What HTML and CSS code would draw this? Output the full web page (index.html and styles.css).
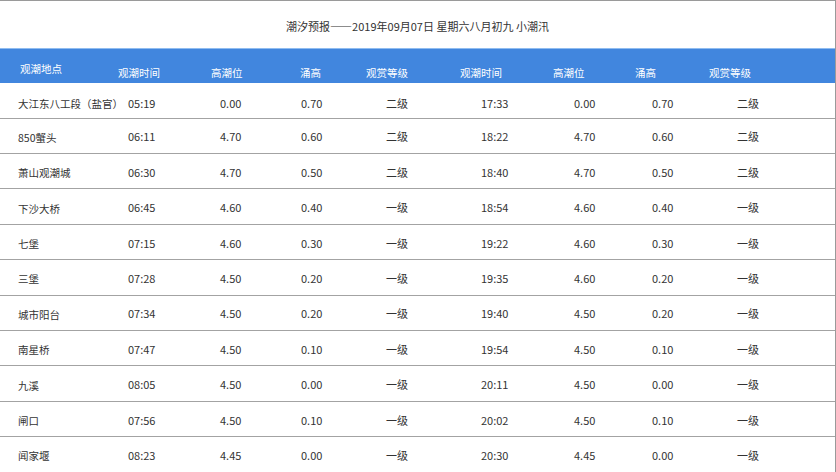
FILE: index.html
```html
<!DOCTYPE html>
<html lang="zh-CN">
<head>
<meta charset="utf-8">
<title>潮汐预报</title>
<link rel="stylesheet" href="styles.css">
</head>
<body>
<div class="page">
  <div class="title">潮汐预报——2019年09月07日 星期六八月初九 小潮汛</div>
  <div class="head">
    <span class="first">观潮地点</span><span>观潮时间</span><span>高潮位</span><span>涌高</span><span>观赏等级</span><span>观潮时间</span><span>高潮位</span><span>涌高</span><span>观赏等级</span>
  </div>
  <div class="rows">
    <div class="row"><span class="name">大江东八工段（盐官）</span><span>05:19</span><span>0.00</span><span>0.70</span><span>二级</span><span>17:33</span><span>0.00</span><span>0.70</span><span>二级</span></div>
    <div class="row"><span class="name">850蟹头</span><span>06:11</span><span>4.70</span><span>0.60</span><span>二级</span><span>18:22</span><span>4.70</span><span>0.60</span><span>二级</span></div>
    <div class="row"><span class="name">萧山观潮城</span><span>06:30</span><span>4.70</span><span>0.50</span><span>二级</span><span>18:40</span><span>4.70</span><span>0.50</span><span>二级</span></div>
    <div class="row"><span class="name">下沙大桥</span><span>06:45</span><span>4.60</span><span>0.40</span><span>一级</span><span>18:54</span><span>4.60</span><span>0.40</span><span>一级</span></div>
    <div class="row"><span class="name">七堡</span><span>07:15</span><span>4.60</span><span>0.30</span><span>一级</span><span>19:22</span><span>4.60</span><span>0.30</span><span>一级</span></div>
    <div class="row"><span class="name">三堡</span><span>07:28</span><span>4.50</span><span>0.20</span><span>一级</span><span>19:35</span><span>4.60</span><span>0.20</span><span>一级</span></div>
    <div class="row"><span class="name">城市阳台</span><span>07:34</span><span>4.50</span><span>0.20</span><span>一级</span><span>19:40</span><span>4.50</span><span>0.20</span><span>一级</span></div>
    <div class="row"><span class="name">南星桥</span><span>07:47</span><span>4.50</span><span>0.10</span><span>一级</span><span>19:54</span><span>4.50</span><span>0.10</span><span>一级</span></div>
    <div class="row"><span class="name">九溪</span><span>08:05</span><span>4.50</span><span>0.00</span><span>一级</span><span>20:11</span><span>4.50</span><span>0.00</span><span>一级</span></div>
    <div class="row"><span class="name">闸口</span><span>07:56</span><span>4.50</span><span>0.10</span><span>一级</span><span>20:02</span><span>4.50</span><span>0.10</span><span>一级</span></div>
    <div class="row"><span class="name">闻家堰</span><span>08:23</span><span>4.45</span><span>0.00</span><span>一级</span><span>20:30</span><span>4.45</span><span>0.00</span><span>一级</span></div>
  </div>
</div>
</body>
</html>
```

FILE: styles.css
```css
html, body {
  margin: 0;
  padding: 0;
  background: #fff;
}
body {
  font-family: "Noto Sans CJK SC", "Noto Sans", sans-serif;
  font-size: 11px;
  color: #333;
  overflow: hidden;
}
.page {
  width: 835px;
  border-top: 1px solid #9a9a9a;
  border-right: 1px solid #9a9a9a;
  height: 480px;
}
.title {
  height: 47px;
  display: flex;
  align-items: center;
  justify-content: center;
  padding-top: 3px;
  box-sizing: border-box;
  color: #333;
  white-space: nowrap;
}
.head {
  height: 35.3px;
  box-sizing: border-box;
  background: #4186de;
  border-top: 1px solid #8fbcf0;
  color: #fff;
  font-size: 10.5px;
  display: grid;
  grid-template-columns: 98px 93px 89px 66px 94px 93px 82px 74px 1fr;
  align-items: center;
  padding-left: 20px;
  padding-top: 12px;
  white-space: nowrap;
}
.head .first {
  margin-top: -7px;
}
.row {
  height: 35.4px;
  box-sizing: border-box;
  border-bottom: 1px solid #a3a3a3;
  display: grid;
  grid-template-columns: 110px 92px 81px 85px 95px 93px 78px 85px 1fr;
  align-items: center;
  padding-left: 18px;
  padding-top: 1px;
  white-space: nowrap;
}
.rows .row:first-child {
  padding-top: 5px;
}
.row .name {
  font-size: 10.5px;
  padding-top: 2px;
}
```
